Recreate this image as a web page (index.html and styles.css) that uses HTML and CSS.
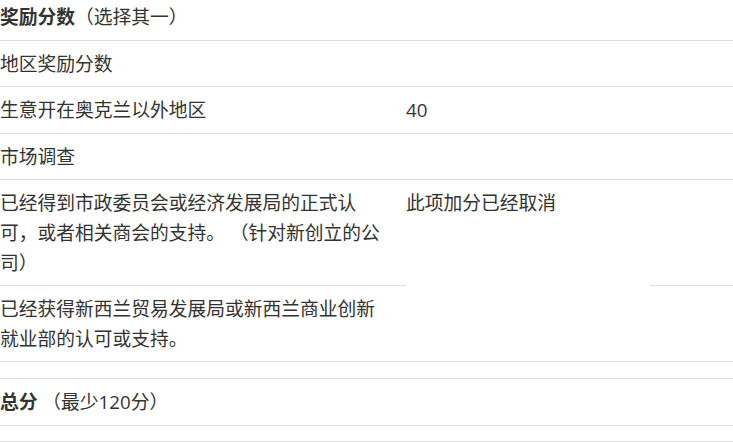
FILE: index.html
```html
<!DOCTYPE html>
<html lang="zh-CN">

<head>
    <meta charset="UTF-8">
    <meta name="viewport" content="width=device-width, initial-scale=1.0">
    <title>奖励分数</title>
    <link rel="stylesheet" href="styles.css">
</head>

<body>

    <!-- Bonus points table -->
    <table class="points-table">
        <colgroup>
            <col class="col-item">
            <col class="col-points">
            <col class="col-extra">
        </colgroup>
        <tbody>
            <tr>
                <td colspan="3"><strong>奖励分数</strong>（选择其一）</td>
            </tr>
            <tr>
                <td>地区奖励分数</td>
                <td></td>
                <td></td>
            </tr>
            <tr>
                <td>生意开在奥克兰以外地区</td>
                <td>40</td>
                <td></td>
            </tr>
            <tr>
                <td>市场调查</td>
                <td></td>
                <td></td>
            </tr>
            <tr>
                <td>已经得到市政委员会或经济发展局的正式认可，或者相关商会的支持。 （针对新创立的公司）</td>
                <td rowspan="2">此项加分已经取消</td>
                <td></td>
            </tr>
            <tr>
                <td>已经获得新西兰贸易发展局或新西兰商业创新就业部的认可或支持。</td>
                <td></td>
            </tr>
            <tr class="empty-row">
                <td colspan="3"></td>
            </tr>
            <tr>
                <td colspan="3"><strong>总分</strong> （最少120分）</td>
            </tr>
            <tr class="empty-row last">
                <td colspan="3"></td>
            </tr>
            <tr class="empty-row">
                <td colspan="3"></td>
            </tr>
        </tbody>
    </table>

</body>

</html>
```

FILE: styles.css
```css
/* Global Styles */
body {
    font-family: "Open Sans", "Noto Sans CJK SC", sans-serif;
    background-color: #fff;
    color: #333;
    margin: 0;
    padding: 0;
}

/* Points Table */
.points-table {
    width: 760px;
    margin-top: -7px;
    border-collapse: collapse;
    table-layout: fixed;
    font-size: 18.75px;
    line-height: 29.6px;
}

.col-item {
    width: 406px;
}

.col-points {
    width: 244px;
}

.points-table td {
    padding: 8px 16px 8px 0;
    border-top: 1px solid #ddd;
    vertical-align: top;
}

.points-table strong {
    font-weight: bold;
}

.points-table .empty-row td {
    height: 0;
    line-height: 0;
}

.points-table .empty-row.last td {
    padding: 7.5px 0;
}
```
